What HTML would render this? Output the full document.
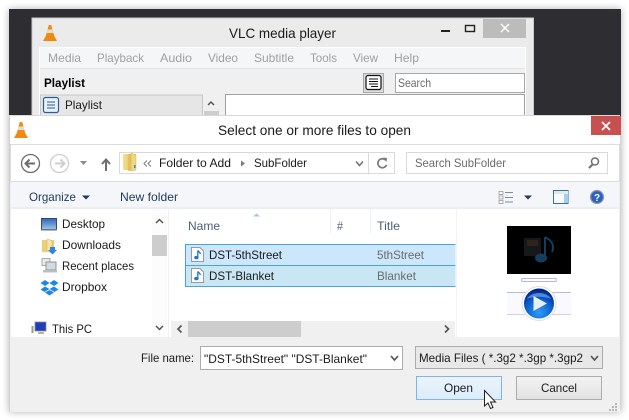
<!DOCTYPE html>
<html><head><meta charset="utf-8"><style>
html,body{margin:0;padding:0;background:#fff;width:629px;height:420px;overflow:hidden}
svg{display:block}
text{font-family:"Liberation Sans",sans-serif;font-size:12px;fill:#1a1a1a}
.m{fill:#a0a0a0}
.g{fill:#6a6a6a}
.h{fill:#4c607a}
.o{fill:#1e395b}
</style></head><body>
<svg width="629" height="420" viewBox="0 0 629 420" xmlns="http://www.w3.org/2000/svg">
<defs>
<filter id="s" x="-5%" y="-5%" width="110%" height="110%"><feGaussianBlur stdDeviation="4"/></filter>
<linearGradient id="btn" x1="0" y1="0" x2="0" y2="1"><stop offset="0" stop-color="#f3f3f3"/><stop offset="1" stop-color="#e2e2e2"/></linearGradient>
<linearGradient id="open" x1="0" y1="0" x2="0" y2="1"><stop offset="0" stop-color="#ebf4fc"/><stop offset="1" stop-color="#dcecfb"/></linearGradient>
<linearGradient id="fold" x1="0" y1="0" x2="1" y2="0"><stop offset="0" stop-color="#f6e08e"/><stop offset="1" stop-color="#d9b64e"/></linearGradient>
<radialGradient id="play" cx=".5" cy=".8" r=".75"><stop offset="0" stop-color="#2f9cf5"/><stop offset=".6" stop-color="#0a5fd0"/><stop offset="1" stop-color="#02258a"/></radialGradient>
<linearGradient id="scr" x1="0" y1="0" x2="0" y2="1"><stop offset="0" stop-color="#2a68b8"/><stop offset="1" stop-color="#a0c4ea"/></linearGradient>
<g id="cone"><path d="M5.800 0 H8.200 L11.500 12 H2.500 Z" fill="#f08a10"/><path d="M4.600 4.500 H9.400 L10.300 8 H3.700 Z" fill="#dedede"/><path d="M0 16 L2.500 11.500 H11.500 L14 16 Z" fill="#ee8a12"/></g>
<g id="note"><path d="M.5 .5 H9 L12.500 4 V14.500 H.5 Z" fill="#fbfbfb" stroke="#9a9a9a"/><path d="M6.800 3.500 V10.200 M6.800 3.500 C7.800 5 9.300 5 9.300 7" stroke="#1c78c8" stroke-width="1.300" fill="none"/><ellipse cx="5.400" cy="10.600" rx="2.200" ry="1.700" fill="#1c78c8"/></g>
</defs>

<rect x="9" y="9" width="612" height="403" fill="#000" opacity=".3" filter="url(#s)"/>
<rect x="9" y="9" width="612" height="110" fill="#2e2d32"/>

<!-- VLC window -->
<rect x="32" y="18" width="501.500" height="100" fill="#ebebeb" stroke="#c9c9c9"/>
<use href="#cone" x="43" y="25"/>
<text x="229" y="38" style="font-size:14px" textLength="107" lengthAdjust="spacingAndGlyphs" fill="#333">VLC media player</text>
<rect x="441" y="30" width="9" height="2" fill="#222"/>
<rect x="465.500" y="25.500" width="9" height="6" fill="none" stroke="#222" stroke-width="1.400"/>
<rect x="483" y="19" width="43" height="19" fill="#bcbcbc"/>
<path d="M501 24 L509 32 M509 24 L501 32" stroke="#fff" stroke-width="1.500"/>
<rect x="39.500" y="47.500" width="486" height="75" fill="#f0f0f0" stroke="#fff"/>
<rect x="40" y="48" width="485" height="20" fill="#f5f6f7"/>
<line x1="40" y1="68.500" x2="525" y2="68.500" stroke="#e3e3e3"/>
<text class="m" x="48" y="62" textLength="33" lengthAdjust="spacingAndGlyphs">Media</text>
<text class="m" x="97" y="62" textLength="47" lengthAdjust="spacingAndGlyphs">Playback</text>
<text class="m" x="160" y="62" textLength="32" lengthAdjust="spacingAndGlyphs">Audio</text>
<text class="m" x="208" y="62" textLength="30" lengthAdjust="spacingAndGlyphs">Video</text>
<text class="m" x="254" y="62" textLength="40" lengthAdjust="spacingAndGlyphs">Subtitle</text>
<text class="m" x="310" y="62" textLength="27" lengthAdjust="spacingAndGlyphs">Tools</text>
<text class="m" x="353" y="62" textLength="25" lengthAdjust="spacingAndGlyphs">View</text>
<text class="m" x="394" y="62" textLength="25" lengthAdjust="spacingAndGlyphs">Help</text>
<text x="44" y="87" font-weight="bold" textLength="41" lengthAdjust="spacingAndGlyphs" style="fill:#000">Playlist</text>
<rect x="363.500" y="73.500" width="20" height="19" fill="#dcdcdc" stroke="#a8a8a8"/>
<rect x="366" y="75.500" width="15" height="14" rx="2" fill="#fff" stroke="#111" stroke-width="1.200"/>
<path d="M369 79 H378 M369 81.500 H378 M369 84 H378 M371 86.500 H378" stroke="#111"/>
<rect x="395.500" y="73.500" width="129" height="19" fill="#fff" stroke="#a8a8a8"/>
<text class="g" x="398" y="87" textLength="33" lengthAdjust="spacingAndGlyphs">Search</text>
<rect x="40.500" y="95" width="162" height="22" fill="#e6e6e6" stroke="#c8c8c8"/>
<rect x="43.500" y="97.500" width="15" height="15" rx="2" fill="#e8f1fa" stroke="#2b5d93" stroke-width="1.200"/>
<path d="M47 102 H55 M47 105 H55 M47 108 H55" stroke="#2b5d93"/>
<text x="65" y="109" textLength="37" lengthAdjust="spacingAndGlyphs">Playlist</text>
<path d="M208 105 L211 102 L214 105" fill="none" stroke="#555" stroke-width="1.500"/>
<rect x="204" y="111" width="15" height="6" fill="#cdcdcd"/>
<rect x="225.500" y="94.500" width="299" height="30" fill="#fff" stroke="#a0a0a0"/>

<!-- Dialog -->
<rect x="9" y="115" width="611" height="297" fill="#f0f0f0"/>
<rect x="9" y="115.500" width="611" height="29" fill="#fff"/>
<line x1="9" y1="115.500" x2="620" y2="115.500" stroke="#d8d8d8"/>
<rect x="9" y="116" width="1" height="296" fill="#d0d0d0"/>
<rect x="591" y="116" width="30" height="19" fill="#c75050"/>
<path d="M602 122 L610 130 M610 122 L602 130" stroke="#fff" stroke-width="1.700"/>
<use href="#cone" x="14" y="122"/>
<text x="218" y="135" style="font-size:14px" textLength="193" lengthAdjust="spacingAndGlyphs">Select one or more files to open</text>

<rect x="10.500" y="144.500" width="609" height="37" fill="#fff" stroke="#dcdcdc"/>
<rect x="11" y="182" width="608" height="25" fill="#f4f6fa"/>
<rect x="11" y="207" width="608" height="2" fill="#eaedf1"/>
<rect x="11" y="209" width="608" height="128" fill="#fff"/>

<!-- nav -->
<circle cx="30.500" cy="163.500" r="9" fill="#fff" stroke="#6e6e6e" stroke-width="1.300"/>
<path d="M35 163.500 H26 M29.500 159.500 L25.500 163.500 L29.500 167.500" fill="none" stroke="#6e6e6e" stroke-width="2"/>
<circle cx="59.500" cy="163.500" r="9" fill="#fff" stroke="#cfcfcf" stroke-width="1.300"/>
<path d="M55 163.500 H64 M60.500 159.500 L64.500 163.500 L60.500 167.500" fill="none" stroke="#cfcfcf" stroke-width="2"/>
<path d="M80 161 H87 L83.500 165 Z" fill="#8a8a8a"/>
<path d="M106 171 V160 M102 164 L106 159.500 L110 164" fill="none" stroke="#6e6e6e" stroke-width="2"/>
<rect x="119.500" y="152.500" width="275" height="21" fill="#fff" stroke="#d9d9d9"/>
<line x1="368.500" y1="153" x2="368.500" y2="173" stroke="#d9d9d9"/>
<rect x="123" y="154" width="13" height="16" fill="url(#fold)"/>
<path d="M128 154 H136 V170 L128 171 Z" fill="#e3c25e"/>
<path d="M131 153 L136 155 V170 L131 171 Z" fill="#f0d67c" stroke="#c5a444" stroke-width=".4"/>
<rect x="134" y="165" width="1.500" height="3" fill="#2c8fe0"/>
<path d="M147 160.500 L144 163.500 L147 166.500 M151 160.500 L148 163.500 L151 166.500" fill="none" stroke="#7a7a7a"/>
<text x="159" y="167" textLength="72" lengthAdjust="spacingAndGlyphs">Folder to Add</text>
<path d="M241 160.500 L245 163.500 L241 166.500 Z" fill="#7a7a7a"/>
<text x="254" y="167" textLength="53" lengthAdjust="spacingAndGlyphs">SubFolder</text>
<path d="M356 161.500 L359.500 165.500 L363 161.500" fill="none" stroke="#707070" stroke-width="1.500"/>
<path d="M385.500 160 A4.500 4.500 0 1 0 386.500 165" fill="none" stroke="#7a7a7a" stroke-width="1.700"/>
<path d="M383 157.500 L387 158 L386.500 162 Z" fill="#7a7a7a"/>
<rect x="406.500" y="152.500" width="201" height="21" fill="#fff" stroke="#d9d9d9"/>
<text class="g" x="415" y="167" textLength="91" lengthAdjust="spacingAndGlyphs">Search SubFolder</text>
<circle cx="595" cy="161.500" r="3.500" fill="none" stroke="#6f6f6f" stroke-width="1.500"/>
<path d="M592.500 164.500 L589 168" stroke="#6f6f6f" stroke-width="2"/>

<!-- toolbar -->
<text class="o" x="29" y="201" textLength="47" lengthAdjust="spacingAndGlyphs">Organize</text>
<path d="M82 195.500 H90 L86 199.500 Z" fill="#1e395b"/>
<text class="o" x="120" y="201" textLength="58" lengthAdjust="spacingAndGlyphs">New folder</text>
<rect x="499" y="191.500" width="4" height="3" fill="#fff" stroke="#8a8a8a" stroke-width=".7"/>
<rect x="499" y="196" width="4" height="3" fill="#fff" stroke="#8a8a8a" stroke-width=".7"/>
<rect x="499" y="200.500" width="4" height="3" fill="#fff" stroke="#8a8a8a" stroke-width=".7"/>
<path d="M505 192.500 H513 M505 197.500 H513 M505 202 H513" stroke="#7a8ea8"/>
<path d="M524 195.500 H532 L528 199.500 Z" fill="#1e395b"/>
<rect x="553.500" y="190.500" width="14.500" height="13" fill="#f8fbfe" stroke="#3e6f93"/>
<rect x="564" y="191" width="4" height="12" fill="#a8cde8"/>
<rect x="554" y="191" width="14" height="3" fill="#dce8f2"/>
<circle cx="597" cy="197" r="6.500" fill="#2a62c0" stroke="#8e9bb0" stroke-width="1.300"/>
<text x="594" y="201" style="font-size:10px;fill:#fff;font-weight:bold">?</text>

<!-- sidebar -->
<rect x="41.500" y="218.500" width="15" height="11" fill="url(#scr)" stroke="#3a4a60"/>
<rect x="41" y="229" width="16" height="1.500" fill="#6a7688"/>
<text x="62" y="228" textLength="43" lengthAdjust="spacingAndGlyphs">Desktop</text>
<rect x="42" y="240" width="12" height="12" fill="#eccf74"/>
<path d="M47 239 L52 240.500 V252 H47 Z" fill="#f5e5a6" stroke="#c9aa50" stroke-width=".4"/>
<path d="M50 247 H55 V250 H57 L52.500 254.500 L48 250 H50 Z" fill="#2d88dc"/>
<text x="62" y="249" textLength="59" lengthAdjust="spacingAndGlyphs">Downloads</text>
<rect x="42" y="258.500" width="8" height="7" fill="#eaeaea" stroke="#8a8a8a" stroke-width=".7"/>
<rect x="46" y="262" width="10" height="8" fill="#cfdce8" stroke="#7e7e7e" stroke-width=".8"/>
<rect x="43" y="270" width="14" height="2.500" fill="#bdbdbd"/>
<text x="62" y="270" textLength="72" lengthAdjust="spacingAndGlyphs">Recent places</text>
<path d="M46.500 280.500 L42 283.500 L46.500 286.500 L51 283.500 Z M55.500 280.500 L51 283.500 L55.500 286.500 L60 283.500 Z M46.500 287 L42 290 L46 292.500 L51 289.500 Z M55.500 287 L60 290 L56 292.500 L51 289.500 Z M46.500 293 L51 296 L55.500 293 L51 290.500 Z" fill="#1f88e5" transform="translate(-1.500 -.5)"/>
<text x="62" y="291" textLength="45" lengthAdjust="spacingAndGlyphs">Dropbox</text>
<rect x="35" y="322" width="11" height="9" fill="#1f3fb8" stroke="#8a8a8a" stroke-width=".8"/>
<rect x="31.500" y="326" width="2" height="7" fill="#8da08a"/>
<rect x="38" y="332" width="6" height="2" fill="#b5b5b5"/>
<text x="52" y="333" textLength="40" lengthAdjust="spacingAndGlyphs">This PC</text>

<rect x="152" y="209" width="15" height="128" fill="#fcfcfc"/>
<rect x="152" y="235" width="15" height="21" fill="#cdcdcd"/>
<path d="M156 223 L159.500 219.500 L163 223" fill="none" stroke="#555" stroke-width="1.500"/>
<path d="M156 326 L159.500 329.500 L163 326" fill="none" stroke="#555" stroke-width="1.500"/>
<line x1="168.500" y1="209" x2="168.500" y2="337" stroke="#f0f0f0"/>

<!-- list -->
<path d="M253 216.500 L256.500 213.500 L260 216.500 Z" fill="#a8c4dc"/>
<text class="h" x="188" y="230" textLength="32" lengthAdjust="spacingAndGlyphs">Name</text>
<line x1="330.500" y1="209" x2="330.500" y2="234" stroke="#eef1f5"/>
<line x1="370.500" y1="209" x2="370.500" y2="234" stroke="#eef1f5"/>
<text class="h" x="337" y="230" textLength="6" lengthAdjust="spacingAndGlyphs">#</text>
<text class="h" x="377" y="230" textLength="23" lengthAdjust="spacingAndGlyphs">Title</text>

<rect x="185.500" y="244.500" width="270" height="21" fill="#cce6fb"/>
<rect x="185.500" y="265.500" width="270" height="21" fill="#c8e6f4"/>
<path d="M455.500 244.500 H185.500 V286.500 H455.500 M185.500 265.500 H455.500" fill="none" stroke="#4aa3e0"/>
<use href="#note" x="191" y="247"/>
<use href="#note" x="191" y="268"/>
<text x="209" y="259" textLength="73" lengthAdjust="spacingAndGlyphs">DST-5thStreet</text>
<text x="209" y="280" textLength="65" lengthAdjust="spacingAndGlyphs">DST-Blanket</text>
<text class="g" x="377" y="259" textLength="47" lengthAdjust="spacingAndGlyphs">5thStreet</text>
<text class="g" x="377" y="280" textLength="39" lengthAdjust="spacingAndGlyphs">Blanket</text>

<rect x="171" y="321" width="284" height="16" fill="#f0f0f0"/>
<rect x="188" y="321" width="113" height="16" fill="#cdcdcd"/>
<path d="M181.500 325.500 L178 329 L181.500 332.500" fill="none" stroke="#555" stroke-width="1.700"/>
<path d="M445 325.500 L448.500 329 L445 332.500" fill="none" stroke="#555" stroke-width="1.700"/>
<line x1="456.500" y1="209" x2="456.500" y2="337" stroke="#f2f2f2"/>

<!-- preview -->
<rect x="507" y="226" width="64" height="48" fill="#000"/>
<rect x="524" y="238" width="17" height="18" fill="#16191c"/>
<rect x="527" y="240" width="11" height="6" fill="#2e241c"/>
<path d="M545 237 V258 M545 237 C551 240 555 245 552 252" fill="none" stroke="#143e5c" stroke-width="2"/>
<ellipse cx="541" cy="258" rx="6" ry="4.500" fill="#143e5c"/>
<rect x="521.500" y="278.500" width="35" height="3" rx="1.500" fill="#fff" stroke="#b4b8d8"/>
<rect x="507" y="292" width="64" height="22" fill="#f8faff"/>
<line x1="507" y1="292.500" x2="571" y2="292.500" stroke="#b8bcd8"/>
<line x1="507" y1="314.500" x2="571" y2="314.500" stroke="#d0d3e4"/>
<circle cx="539" cy="303.500" r="17" fill="#fff" stroke="#dcdeea"/>
<circle cx="539" cy="303.500" r="15" fill="url(#play)"/>
<path d="M527 299 C531 291 547 291 551 299 C545 296 533 296 527 299 Z" fill="#8cc4f4" opacity=".55"/>
<path d="M533.500 296 L547 303.500 L533.500 311 Z" fill="#e6effa"/>

<!-- bottom -->
<text x="141" y="362" textLength="53" lengthAdjust="spacingAndGlyphs">File name:</text>
<rect x="200.500" y="346.500" width="202" height="23" fill="#fff" stroke="#acacac"/>
<text x="204" y="363" textLength="163" lengthAdjust="spacingAndGlyphs">"DST-5thStreet" "DST-Blanket"</text>
<path d="M391 356 L394.500 360 L398 356" fill="none" stroke="#555" stroke-width="1.700"/>
<rect x="415.500" y="346.500" width="187" height="22" fill="#e8e8e8" stroke="#acacac"/>
<text x="419" y="362" textLength="164" lengthAdjust="spacingAndGlyphs">Media Files ( *.3g2 *.3gp *.3gp2</text>
<path d="M591 356 L594.500 360 L598 356" fill="none" stroke="#555" stroke-width="1.700"/>
<rect x="416.500" y="376.500" width="85" height="23" fill="url(#open)" stroke="#7eb4ea"/>
<text x="444" y="392" textLength="29" lengthAdjust="spacingAndGlyphs">Open</text>
<rect x="516.500" y="376.500" width="85" height="23" fill="url(#btn)" stroke="#acacac"/>
<text x="541" y="392" textLength="36" lengthAdjust="spacingAndGlyphs">Cancel</text>
<path d="M484.500 390.500 V406 L488 403 L490.500 408.500 L493 407.500 L490.500 402 L495.500 402 Z" fill="#fff" stroke="#222"/>
<g fill="#b8b8b8"><rect x="615" y="403" width="2" height="2"/><rect x="612" y="406" width="2" height="2"/><rect x="615" y="406" width="2" height="2"/><rect x="609" y="409" width="2" height="2"/><rect x="612" y="409" width="2" height="2"/><rect x="615" y="409" width="2" height="2"/></g>
</svg>
</body></html>
